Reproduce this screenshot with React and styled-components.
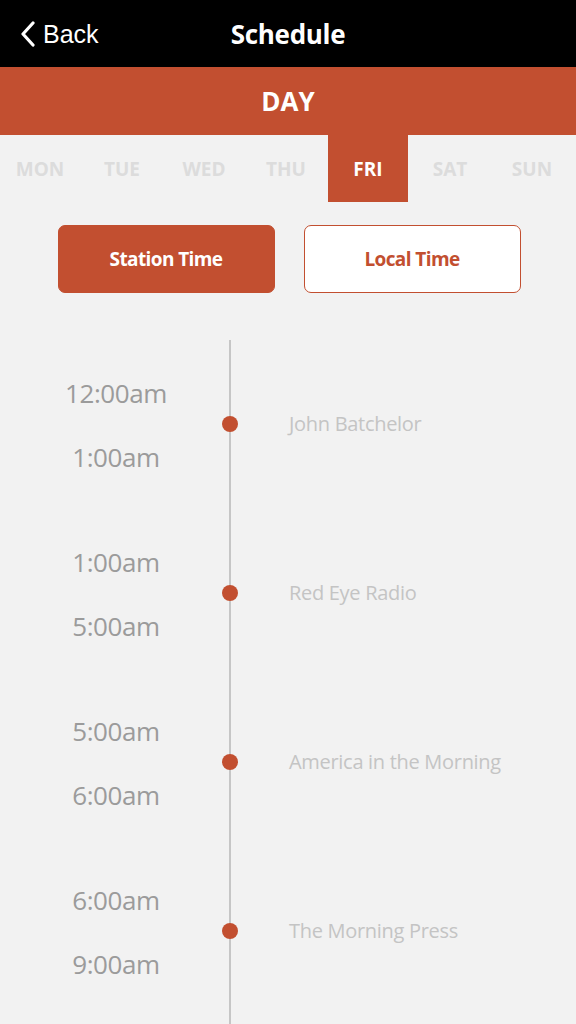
import React, { useState } from 'react';
import styled, { createGlobalStyle } from 'styled-components';

const ORANGE = '#c24f30';

const GlobalStyle = createGlobalStyle`
  html, body {
    margin: 0;
    padding: 0;
    background: #f2f2f2;
  }
  body {
    font-family: "Open Sans", "Noto Sans", sans-serif;
  }
`;

const days = ['MON', 'TUE', 'WED', 'THU', 'FRI', 'SAT', 'SUN'];

const shows = [
  { start: '12:00am', end: '1:00am', name: 'John Batchelor' },
  { start: '1:00am', end: '5:00am', name: 'Red Eye Radio' },
  { start: '5:00am', end: '6:00am', name: 'America in the Morning' },
  { start: '6:00am', end: '9:00am', name: 'The Morning Press' },
];

export default function App() {
  const [day, setDay] = useState('FRI');
  const [mode, setMode] = useState('station');

  return (
    <>
      <GlobalStyle />
      <Page>
        <TopBar>
          <BackButton>
            <svg width="16" height="26" viewBox="0 0 16 26">
              <polyline points="13,2 3,13 13,24" fill="none" stroke="#fff" strokeWidth="3.2" strokeLinecap="round" strokeLinejoin="round" />
            </svg>
            <span>Back</span>
          </BackButton>
          <Title>Schedule</Title>
        </TopBar>

        <DayBand>DAY</DayBand>

        <DayRow>
          {days.map((d) => (
            <DayTab key={d} $active={d === day} onClick={() => setDay(d)}>
              {d}
            </DayTab>
          ))}
        </DayRow>

        <ToggleRow>
          <ToggleButton $active={mode === 'station'} onClick={() => setMode('station')}>
            Station Time
          </ToggleButton>
          <ToggleButton $active={mode === 'local'} onClick={() => setMode('local')}>
            Local Time
          </ToggleButton>
        </ToggleRow>

        <Timeline>
          {shows.map((s) => (
            <Row key={s.name}>
              <Times>
                <span>{s.start}</span>
                <span>{s.end}</span>
              </Times>
              <DotCell>
                <Dot />
              </DotCell>
              <ShowName>{s.name}</ShowName>
            </Row>
          ))}
        </Timeline>
      </Page>
    </>
  );
}

const Page = styled.div`
  width: 576px;
  height: 1024px;
  display: flex;
  flex-direction: column;
  background: #f2f2f2;
  overflow: hidden;
`;

const TopBar = styled.header`
  position: relative;
  flex: none;
  height: 67px;
  background: #000;
  display: flex;
  align-items: center;
  justify-content: center;
`;

const BackButton = styled.button`
  position: absolute;
  left: 20px;
  top: 20px;
  display: flex;
  align-items: center;
  gap: 7px;
  border: none;
  background: transparent;
  padding: 0;
  color: #fff;
  font-family: "Liberation Sans", Arial, sans-serif;
  font-size: 25px;
  line-height: 28px;
  cursor: pointer;
`;

const Title = styled.h1`
  margin: 0;
  color: #fff;
  font-size: 26px;
  font-weight: 700;
  letter-spacing: -0.3px;
`;

const DayBand = styled.div`
  flex: none;
  height: 68px;
  background: ${ORANGE};
  color: #fff;
  display: flex;
  align-items: center;
  justify-content: center;
  font-size: 26px;
  font-weight: 700;
`;

const DayRow = styled.nav`
  flex: none;
  display: grid;
  grid-template-columns: repeat(7, 82px);
  height: 67px;
`;

const DayTab = styled.div`
  display: flex;
  align-items: center;
  justify-content: center;
  margin-right: 2px;
  font-size: 19px;
  font-weight: 700;
  color: ${(p) => (p.$active ? '#fff' : '#dcdcdc')};
  background: ${(p) => (p.$active ? ORANGE : 'transparent')};
  cursor: pointer;
`;

const ToggleRow = styled.div`
  flex: none;
  display: flex;
  justify-content: center;
  gap: 29px;
  padding: 23px 0 47px;
  padding-left: 2px;
`;

const ToggleButton = styled.button`
  width: 217px;
  height: 68px;
  border-radius: 7px;
  border: 1.5px solid ${ORANGE};
  background: ${(p) => (p.$active ? ORANGE : '#fff')};
  color: ${(p) => (p.$active ? '#fff' : ORANGE)};
  font-family: "Open Sans", "Noto Sans", sans-serif;
  font-size: 19px;
  font-weight: 700;
  letter-spacing: -0.6px;
  cursor: pointer;
`;

const Timeline = styled.section`
  position: relative;
  flex: 1;
  display: flex;
  flex-direction: column;

  &::before {
    content: '';
    position: absolute;
    left: 229px;
    top: 0;
    bottom: 0;
    width: 2px;
    background: #c6c6c6;
  }
`;

const Row = styled.div`
  flex: none;
  display: grid;
  grid-template-columns: 222px 16px 1fr;
  align-items: center;
  height: 169px;
`;

const Times = styled.div`
  display: flex;
  flex-direction: column;
  align-items: center;
  gap: 32px;
  padding-left: 10px;
  margin-top: 1px;
  color: #9b9b9b;
  font-size: 26px;
  line-height: 32px;
  letter-spacing: -0.4px;
`;

const DotCell = styled.div`
  position: relative;
  z-index: 1;
  display: flex;
  justify-content: center;
  margin-top: -2px;
`;

const Dot = styled.span`
  width: 16px;
  height: 16px;
  border-radius: 50%;
  background: ${ORANGE};
`;

const ShowName = styled.div`
  padding-left: 51px;
  margin-top: -3px;
  color: #c4c4c4;
  font-size: 20px;
  font-weight: 400;
  letter-spacing: -0.3px;
`;
